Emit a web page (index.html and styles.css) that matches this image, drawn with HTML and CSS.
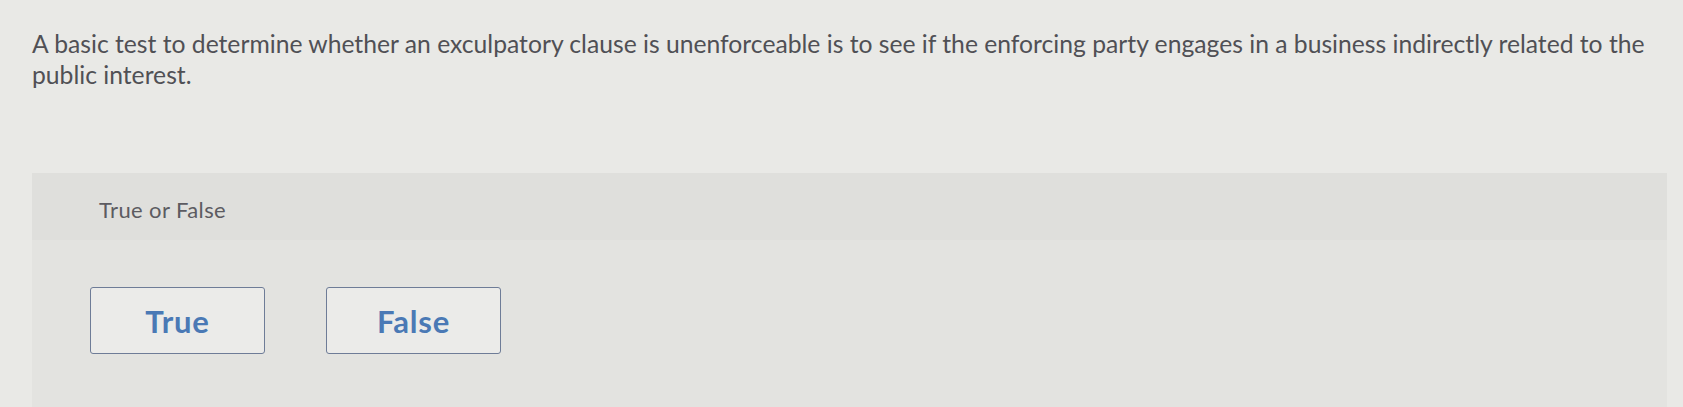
FILE: index.html
```html
<!DOCTYPE html>
<html lang="en">
<head>
<meta charset="utf-8">
<title>True or False</title>
<link rel="stylesheet" href="styles.css">
</head>
<body>
<main class="page">
  <p class="prompt">A basic test to determine whether an exculpatory clause is unenforceable is to see if the enforcing party engages in a business indirectly related to the public interest.</p>
  <section class="answer-panel">
    <header class="panel-head">True or False</header>
    <div class="choices">
      <button class="choice" type="button">True</button>
      <button class="choice" type="button">False</button>
    </div>
  </section>
</main>
</body>
</html>
```

FILE: styles.css
```css
html, body {
  margin: 0;
  height: 100%;
}

body {
  background: #e9e9e6;
  font-family: "Lato", "Open Sans", sans-serif;
  color: #4a4a4c;
  overflow: hidden;
}

.page {
  padding: 28px 16px 0 32px;
}

.prompt {
  margin: 0;
  font-size: 24.7px;
  line-height: 31px;
  color: #505055;
  max-width: 1628px;
}

.answer-panel {
  margin-top: 83px;
  width: 1635px;
  height: 234px;
  background: #e3e3e0;
}

.panel-head {
  height: 67px;
  padding: 24px 0 0 67px;
  box-sizing: border-box;
  background: #dfdfdc;
  font-size: 22px;
  line-height: 26px;
  letter-spacing: 0.4px;
  color: #5c5b61;
}

.choices {
  display: flex;
  gap: 61px;
  padding: 47px 0 0 58px;
}

.choice {
  width: 175px;
  height: 67px;
  background: #ebebe9;
  border: 1.5px solid #6e7c97;
  border-radius: 3px;
  font-family: "Lato", "Open Sans", sans-serif;
  font-weight: 700;
  font-size: 31px;
  letter-spacing: 0.8px;
  color: #4a79b5;
  padding: 0;
}
```
